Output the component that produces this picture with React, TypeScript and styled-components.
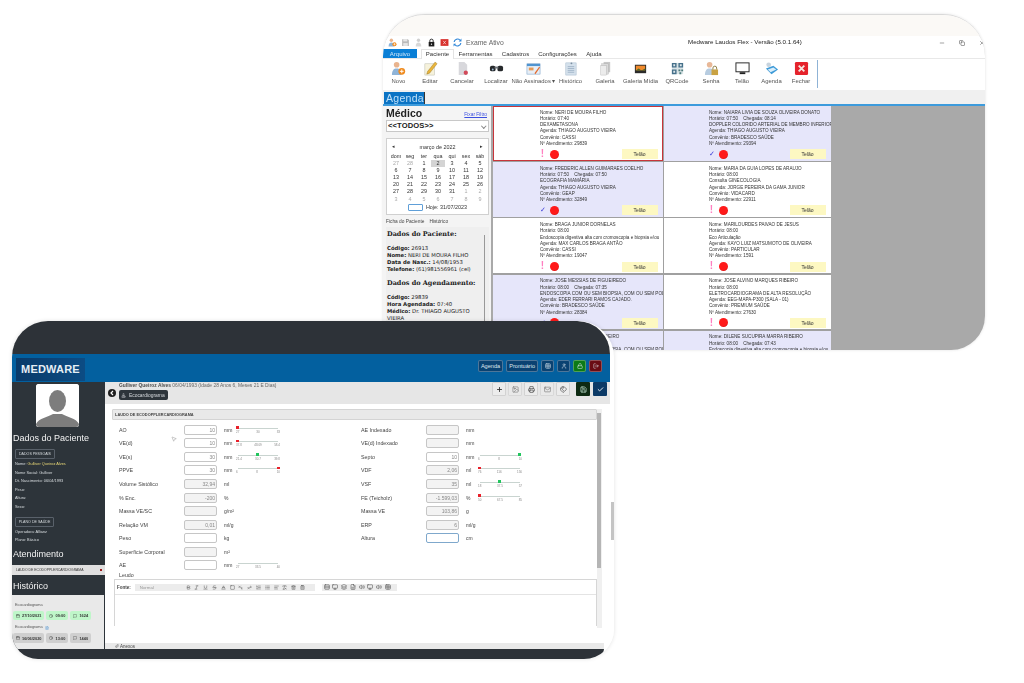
import React from "react";
import styled, { createGlobalStyle } from "styled-components";
import {
  Plus, Image, Printer, Mail, Tags, Save, Check, User, Lock, LogOut, Calendar, Clock, MessageSquare, FileText,
  Bold, Italic, Underline, Strikethrough, Baseline, Subscript, Superscript, List, ListOrdered,
  AlignLeft, RemoveFormatting, Trash2, Table, Monitor, Paperclip, MousePointer2, Stamp, Square, ClipboardList,
  Volume2, Layers, FileSpreadsheet, Rows3, Copy, Minus, X,
} from "lucide-react";

const Global = createGlobalStyle`
  html, body { margin: 0; padding: 0; background: #fff; }
  #root { width: 1024px; height: 683px; overflow: hidden; }
  * { box-sizing: border-box; }
`;

const Page = styled.div`
  position: relative;
  width: 1024px;
  height: 683px;
  background: #fff;
  font-family: "Liberation Sans", Arial, sans-serif;
`;

/* ---------- Desktop window (top) ---------- */
const DesktopWindow = styled.section`
  position: absolute;
  left: 383px;
  top: 14px;
  width: 602px;
  height: 336px;
  background: #fff;
  border-top: 1px solid #d9d9d9;
  border-radius: 42px 42px 34px 0;
  overflow: hidden;
  display: flex;
  flex-direction: column;
  filter: blur(0.35px);
  box-shadow: 0 0 3px rgba(0, 0, 0, 0.12);
`;
const TopBand = styled.div`
  height: 21px;
  flex: none;
  background: #fbf9f6;
`;
const QuickBar = styled.div`
  height: 13px;
  flex: none;
  display: flex;
  align-items: center;
  padding-left: 5px;
  gap: 4px;
  position: relative;
`;
const QuickLabel = styled.span`
  font-size: 6.8px;
  color: #666;
  margin-left: 0;
`;
const TitleText = styled.span`
  position: absolute;
  left: 305px;
  top: 2px;
  font-size: 6.2px;
  color: #222;
  white-space: nowrap;
`;
const WinControls = styled.div`
  margin-left: auto;
  display: flex;
  gap: 14px;
  color: #444;
  align-items: center;
`;
const MenuRow = styled.div`
  height: 10px;
  flex: none;
  display: flex;
  align-items: stretch;
  font-size: 6px;
  color: #333;
  border-bottom: 1px solid #e8e8e8;
`;
const FileTab = styled.div`
  width: 34px;
  background: #0a7fd6;
  color: #cfe7fa;
  text-align: center;
  line-height: 10px;
`;
const MenuTab = styled.div<{ $w: number; $on?: boolean }>`
  width: ${(p) => p.$w}px;
  text-align: center;
  line-height: 10px;
  ${(p) => (p.$on ? "border: 1px solid #e3e3e3; border-bottom: 0; background:#fff; height:11px; line-height:9px;" : "")}
`;
const Ribbon = styled.div`
  height: 31px;
  flex: none;
  display: flex;
  background: #fff;
`;
const RibbonItem = styled.div<{ $w: number }>`
  width: ${(p) => p.$w}px;
  flex: none;
  display: flex;
  flex-direction: column;
  align-items: center;
  padding-top: 2px;
  font-size: 5.9px;
  color: #555;
  white-space: nowrap;
  span { margin-top: 2px; }
`;
const RibbonEnd = styled.div`
  width: 1px;
  height: 28px;
  margin: 1px 0 0 1px;
  background: #8fb3d6;
`;
const TabStrip = styled.div`
  height: 14px;
  flex: none;
  background: #f0f0f0;
  display: flex;
  align-items: flex-end;
  padding-left: 1px;
`;
const AgendaTab = styled.div`
  width: 41px;
  height: 12px;
  background: #0a73c4;
  color: #bfe0f8;
  font-size: 10.5px;
  line-height: 12px;
  letter-spacing: 0.3px;
  padding-left: 2px;
  border-right: 1px solid #333;
`;
const BlueLine = styled.div`
  height: 2px;
  flex: none;
  background: #3d9bdc;
`;
const DeskBody = styled.div`
  flex: 1;
  display: flex;
  min-height: 0;
`;
const SidePanel = styled.div`
  width: 108px;
  flex: none;
  background: #f4f4f4;
  padding: 0 2px 0 3px;
  display: flex;
  flex-direction: column;
`;
const MedicoRow = styled.div`
  display: flex;
  align-items: flex-end;
  justify-content: space-between;
  height: 13px;
  padding-right: 2px;
  b { font-size: 10.5px; color: #222; }
  a { font-size: 4.8px; color: #3b4fe0; text-decoration: underline; margin-bottom: 2px; }
`;
const SelectBox = styled.div`
  margin-top: 1px;
  height: 12px;
  background: #fff;
  border: 1px solid #c8c8c8;
  font-size: 7.6px;
  font-weight: bold;
  color: #222;
  line-height: 10px;
  padding-left: 1px;
  position: relative;
  letter-spacing: 0.1px;
  &::after {
    content: "";
    position: absolute;
    right: 3px;
    top: 3px;
    width: 2.5px;
    height: 2.5px;
    border-right: 1px solid #888;
    border-bottom: 1px solid #888;
    transform: rotate(45deg);
  }
`;
const CalendarBox = styled.div`
  margin-top: 6px;
  height: 77px;
  background: #fff;
  border: 1px solid #d0d0d0;
  padding: 3px 2px 0;
  font-size: 5.4px;
  color: #444;
`;
const CalHeader = styled.div`
  height: 9px;
  display: flex;
  justify-content: space-between;
  align-items: center;
  padding: 0 3px;
  color: #333;
  i { font-style: normal; font-size: 4.5px; }
`;
const CalGrid = styled.div`
  display: grid;
  grid-template-columns: repeat(7, 14px);
  grid-auto-rows: 7.1px;
  line-height: 7.1px;
  text-align: center;
  margin-top: 2px;
`;
const CalCell = styled.div<{ $muted?: boolean; $sel?: boolean; $head?: boolean }>`
  color: ${(p) => (p.$muted ? "#aaa" : "#333")};
  background: ${(p) => (p.$sel ? "#d4d4d4" : "transparent")};
  ${(p) => (p.$head ? "margin-bottom:1px;" : "")}
`;
const TodayRow = styled.div`
  display: flex;
  justify-content: center;
  align-items: center;
  gap: 3px;
  margin-top: 1px;
  height: 7px;
  color: #333;
  &::before {
    content: "";
    width: 13px;
    height: 5px;
    border: 1px solid #5f9fd8;
    border-radius: 1px;
  }
`;
const SideTabs = styled.div`
  height: 12px;
  flex: none;
  display: flex;
  align-items: center;
  gap: 5px;
  font-size: 4.8px;
  color: #444;
  padding-top: 1px;
`;
const PatientPane = styled.div`
  flex: 1;
  background: #efefef;
  font-family: "DejaVu Sans", sans-serif;
  font-size: 5.3px;
  color: #222;
  padding: 3px 0 0 1px;
  line-height: 7px;
  position: relative;
  overflow: hidden;
  &::after {
    content: "";
    position: absolute;
    right: 4px;
    top: 8px;
    bottom: 0;
    width: 1px;
    background: #999;
  }
  h4 {
    margin: 0;
    font-family: "DejaVu Serif", serif;
    font-size: 6.5px;
    line-height: 9px;
    font-weight: bold;
  }
  p { margin: 0; padding-right: 10px; }
`;
const PaneGap = styled.div`
  height: 6px;
`;
const CardsArea = styled.div`
  flex: 1;
  background: #a9a9a9;
  min-width: 0;
  padding: 0 0 0 2px;
  overflow: hidden;
`;
const CardsGrid = styled.div`
  display: grid;
  grid-template-columns: 169.5px 166.5px;
  grid-auto-rows: 54.7px;
  column-gap: 1.5px;
  row-gap: 1.5px;
  background: #a0a0a0;
  width: 337.5px;
`;
const Card = styled.article<{ $tone?: boolean; $active?: boolean; $second?: boolean }>`
  background: ${(p) => (p.$tone ? "#e6e6fa" : "#fff")};
  ${(p) => (p.$active ? "outline: 1px solid #c8353a; outline-offset: -1px;" : "")}
  padding: 3.7px 5px 0 ${(p) => (p.$second ? 45 : 47)}px;
  font-size: 4.6px;
  line-height: 6.25px;
  color: #333;
  overflow: hidden;
  white-space: pre;
  display: flex;
  flex-direction: column;
`;
const CardLine = styled.div`
  height: 6.25px;
`;
const CardStatus = styled.div`
  display: flex;
  align-items: center;
  gap: 4.5px;
  margin-top: 1.5px;
  height: 11px;
`;
const Exclam = styled.span`
  font-size: 10px;
  font-weight: bold;
  color: #ff7fc0;
  width: 5px;
  text-align: center;
`;
const CheckMark = styled.span`
  font-size: 7px;
  color: #3b3bd8;
  width: 5px;
  text-align: center;
`;
const Ball = styled.span`
  width: 9px;
  height: 9px;
  border-radius: 50%;
  background: radial-gradient(circle at 45% 40%, #ff1a1a 55%, #b60000 100%);
`;
const TelaoBtn = styled.span`
  margin-left: auto;
  width: 36px;
  height: 10px;
  background: #fdf8c2;
  text-align: center;
  line-height: 10px;
  font-size: 5px;
  color: #333;
`;

/* ---------- Web app window (bottom) ---------- */
const WebWindow = styled.section`
  position: absolute;
  left: 12px;
  top: 321px;
  width: 602px;
  height: 338px;
  display: flex;
  flex-direction: column;
  background: #fff;
  border-radius: 36px 36px 30px 26px;
  overflow: hidden;
  filter: blur(0.4px);
  box-shadow: 0 0 4px rgba(0, 0, 0, 0.12);
`;
const WebTop = styled.div`
  height: 33px;
  flex: none;
  margin-right: 4px;
  background: #2d3238;
  border-top-right-radius: 34px;
`;
const WebHeader = styled.header`
  height: 28px;
  flex: none;
  margin-right: 4px;
  background: #03609f;
  display: flex;
  align-items: flex-end;
  padding-left: 4px;
`;
const Logo = styled.div`
  width: 69px;
  height: 23px;
  background: linear-gradient(90deg, #0a3a69, #0c4c84);
  color: #e6eef5;
  font-size: 11px;
  font-weight: bold;
  line-height: 23px;
  text-align: center;
  letter-spacing: 0.2px;
  margin-bottom: 1px;
`;
const HeaderActions = styled.div`
  margin-left: auto;
  display: flex;
  align-items: center;
  gap: 3px;
  height: 100%;
  padding: 0 8px 4px 0;
`;
const HeadBtn = styled.div<{ $bg?: string }>`
  height: 12px;
  padding: 0 2px;
  min-width: 13px;
  background: ${(p) => p.$bg ?? "#0a4272"};
  border: 1px solid rgba(255, 255, 255, 0.28);
  border-radius: 2px;
  color: #dfe8f0;
  font-size: 5.6px;
  line-height: 10px;
  display: flex;
  align-items: center;
  justify-content: center;
`;
const WebMain = styled.div`
  flex: 1;
  display: flex;
  min-height: 0;
`;
const Sidebar = styled.aside`
  width: 93px;
  flex: none;
  background: #2d343a;
  color: #d8dde0;
  display: flex;
  flex-direction: column;
  font-size: 3.9px;
  overflow: hidden;
`;
const Avatar = styled.div`
  width: 43px;
  height: 43px;
  margin: 2px 0 0 24px;
  flex: none;
  background: #fff;
  border-radius: 3px;
  overflow: hidden;
`;
const SideTitle = styled.h3<{ $mt: number }>`
  margin: ${(p) => p.$mt}px 0 0 1px;
  font-size: 9px;
  line-height: 11px;
  font-weight: normal;
  color: #f2f2f2;
  flex: none;
`;
const SideTag = styled.div<{ $mt: number; $w: number }>`
  margin: ${(p) => p.$mt}px 0 0 3px;
  width: ${(p) => p.$w}px;
  height: 10px;
  flex: none;
  border: 1px solid #59616a;
  border-radius: 1px;
  text-align: center;
  line-height: 8px;
  font-size: 3.6px;
`;
const SideField = styled.div`
  height: 8.6px;
  line-height: 8.6px;
  padding-left: 3px;
  flex: none;
  white-space: nowrap;
  em { font-style: normal; color: #e8d777; }
`;
const SideFieldsTop = styled.div<{ $mt: number }>`
  margin-top: ${(p) => p.$mt}px;
`;
const AttendRow = styled.div`
  margin: 5px -1px 0 0;
  height: 10px;
  flex: none;
  background: #dfdfdf;
  color: #333;
  display: flex;
  align-items: center;
  justify-content: space-between;
  padding: 0 4px;
  font-size: 3.4px;
  i { width: 2.5px; height: 2.5px; background: #9c1c1c; }
`;
const HistoryBox = styled.div`
  margin-top: 3px;
  flex: 1;
  background: #e9e9e9;
  color: #555;
  padding: 8px 1px 0;
  margin-right: 1px;
  font-size: 3.8px;
`;
const HistLabel = styled.div<{ $mt?: number }>`
  height: 5px;
  line-height: 5px;
  padding-left: 2px;
  margin-top: ${(p) => p.$mt ?? 0}px;
  display: flex;
  gap: 2px;
  align-items: center;
`;
const ChipRow = styled.div`
  display: flex;
  gap: 2px;
  margin-top: 3px;
`;
const Chip = styled.span<{ $green?: boolean }>`
  height: 9.5px;
  padding: 0 3px;
  background: ${(p) => (p.$green ? "#bff6c9" : "#cfcfcf")};
  color: #333;
  border-radius: 2px;
  font-size: 3.9px;
  font-weight: bold;
  white-space: nowrap;
  display: inline-flex;
  align-items: center;
  gap: 2px;
`;
const Content = styled.div`
  flex: 1;
  min-width: 0;
  display: flex;
  flex-direction: column;
  position: relative;
  background: #fff;
`;
const OuterThumb = styled.div`
  position: absolute;
  right: 0;
  top: 120px;
  width: 3px;
  height: 38px;
  background: #c4c4c4;
`;
const PatientStrip = styled.div`
  height: 22px;
  flex: none;
  margin-right: 4px;
  background: #e6e6e6;
  display: flex;
  padding-left: 3px;
  position: relative;
`;
const BackIcon = styled.div`
  margin-top: 1px;
  width: 8px;
  flex: none;
`;
const StripText = styled.div`
  padding: 1px 0 0 3px;
  font-size: 4.9px;
  color: #666;
  white-space: nowrap;
  b { color: #4d4d4d; }
`;
const ExamBtn = styled.div`
  margin-top: 2px;
  width: 49px;
  height: 10px;
  background: #2d343a;
  color: #d5d9dc;
  border-radius: 2px;
  display: flex;
  align-items: center;
  padding-left: 2px;
  gap: 3px;
  font-size: 4.9px;
`;
const ToolGroup = styled.div`
  margin-left: auto;
  display: flex;
  gap: 2px;
  padding: 0 3px 0 0;
`;
const ToolBtn = styled.div<{ $bg?: string; $fg?: string; $ml?: number; $faint?: boolean }>`
  width: 14px;
  height: 14px;
  margin-left: ${(p) => p.$ml ?? 0}px;
  border-radius: 1px;
  background: ${(p) => p.$bg ?? "#ececec"};
  color: ${(p) => p.$fg ?? "#333"};
  ${(p) => (p.$bg ? "" : "border: 1px solid #d2d2d2;")}
  opacity: ${(p) => (p.$faint ? 0.65 : 1)};
  display: flex;
  align-items: center;
  justify-content: center;
`;
const FormPanel = styled.div`
  flex: 1;
  min-height: 0;
  padding: 5px 0 0 7px;
  display: flex;
  flex-direction: column;
  position: relative;
`;
const FormInner = styled.div`
  width: 485px;
  position: relative;
  flex: none;
`;
const SectionBar = styled.div`
  height: 11px;
  background: #e9e9e9;
  border: 1px solid #d4d4d4;
  border-radius: 1px;
  font-size: 3.9px;
  line-height: 9px;
  padding-left: 2px;
  color: #444;
  font-weight: bold;
`;
const FormColumns = styled.div`
  display: grid;
  grid-template-columns: 242px 1fr;
  margin-top: 3px;
`;
const FormCol = styled.div`
  display: flex;
  flex-direction: column;
`;
const FieldRow = styled.div`
  height: 13.55px;
  display: flex;
  align-items: center;
  padding-left: 7px;
  font-size: 5.3px;
  color: #444;
`;
const FieldLabel = styled.div`
  width: 65px;
  flex: none;
`;
const ValueBox = styled.div<{ $off?: boolean; $focus?: boolean }>`
  width: 33px;
  height: 10px;
  flex: none;
  border: 1px solid ${(p) => (p.$focus ? "#7fa8cc" : "#c6c6c6")};
  border-radius: 2px;
  background: ${(p) => (p.$off ? "#f3f3f3" : "#fff")};
  text-align: right;
  padding-right: 1px;
  font-size: 5px;
  line-height: 8px;
  color: #888;
`;
const UnitText = styled.div`
  width: 15px;
  flex: none;
  margin-left: 7px;
  font-size: 5px;
  color: #444;
`;
const Gauge = styled.div`
  width: 44px;
  margin-left: -3px;
  position: relative;
  height: 10px;
  flex: none;
`;
const GaugeLine = styled.div`
  position: absolute;
  left: 2px;
  right: 2px;
  top: 3px;
  height: 1px;
  background: #c9d4d0;
`;
const GaugeDot = styled.i<{ $c: string; $left: number }>`
  position: absolute;
  top: 1.5px;
  left: ${(p) => p.$left}%;
  width: 2.5px;
  height: 2.5px;
  background: ${(p) => p.$c};
`;
const GaugeLabels = styled.div`
  position: absolute;
  left: 0;
  right: 0;
  top: 5px;
  display: flex;
  justify-content: space-between;
  font-size: 3px;
  line-height: 4px;
  color: #888;
`;
const Pointer = styled.div`
  position: absolute;
  left: 59px;
  top: 19px;
  color: #999;
`;
const LeudoLabel = styled.div`
  margin: 0 0 0 7px;
  font-size: 5.3px;
  line-height: 7px;
  color: #444;
  height: 7px;
`;
const Editor = styled.div`
  margin: 0 0 0 2px;
  width: 483px;
  height: 47px;
  border: 1px solid #d6d6d6;
  border-bottom: 0;
  flex: none;
`;
const EditorBar = styled.div`
  height: 15px;
  border-bottom: 1px solid #e4e4e4;
  display: flex;
  align-items: center;
  padding-left: 2px;
  gap: 4px;
`;
const FontLabel = styled.b`
  font-size: 4.5px;
  color: #444;
`;
const EditorGroup = styled.div<{ $w: number; $gap: number; $ml?: number }>`
  height: 7px;
  width: ${(p) => p.$w}px;
  margin-left: ${(p) => p.$ml ?? 0}px;
  background: #ececec;
  display: flex;
  align-items: center;
  gap: ${(p) => p.$gap}px;
  color: #444;
  padding-left: 2px;
  font-size: 4.4px;
`;
const FontSelect = styled.span`
  width: 45px;
  color: #999;
  padding-left: 3px;
`;
const InnerScroll = styled.div`
  position: absolute;
  left: 485px;
  top: 0;
  width: 5px;
  height: 219px;
  background: #f0f0f0;
  &::after {
    content: "";
    position: absolute;
    left: 0;
    top: 4px;
    width: 4px;
    height: 155px;
    background: #b5b5b5;
  }
`;
const AnexosBar = styled.div`
  margin-top: auto;
  height: 6px;
  flex: none;
  margin-right: 10px;
  margin-left: -7px;
  padding-left: 10px;
  background: #e9e9e9;
  font-size: 4.5px;
  line-height: 7px;
  color: #444;
  overflow: hidden;
`;
const WebFooter = styled.div`
  height: 10px;
  flex: none;
  margin-right: 10px;
  background: #2d3238;
  border-bottom-right-radius: 24px;
`;

/* ---------- Drawn icons ---------- */
const Svg = ({ s = 16, children }: { s?: number; children: React.ReactNode }) => (
  <svg width={s} height={s} viewBox="0 0 16 16">{children}</svg>
);
const DrawnIcon = ({ name, s = 16 }: { name: string; s?: number }) => {
  switch (name) {
    case "novo":
      return <Svg s={s}><circle cx="6" cy="4" r="3" fill="#e9b48e" /><path d="M1 15c0-5 2-7 5-7s5 2 5 7z" fill="#8fb4d8" /><circle cx="11.5" cy="11" r="3.6" fill="#f08a1c" /><path d="M11.5 9v4M9.5 11h4" stroke="#fff" strokeWidth="1" /></Svg>;
    case "editar":
      return <Svg s={s}><rect x="2" y="3" width="10" height="12" fill="#f6f2dc" stroke="#b5b5a5" strokeWidth=".5" /><path d="M5 11 13 1l2 2-8 10-3 1z" fill="#e9b43a" stroke="#8a6a20" strokeWidth=".4" /></Svg>;
    case "cancelar":
      return <Svg s={s}><path d="M4 1h6l3 3v11H4z" fill="#d8d8dc" /><circle cx="11.5" cy="12.5" r="2.3" fill="#d24a5a" /></Svg>;
    case "localizar":
      return <Svg s={s}><rect x="1" y="5" width="6" height="6" rx="2" fill="#26292c" /><rect x="9" y="5" width="6" height="6" rx="2" fill="#26292c" /><rect x="6" y="6" width="4" height="2" fill="#6d7278" /><circle cx="4" cy="9" r="1" fill="#9db9d0" /></Svg>;
    case "assinados":
      return <Svg s={s}><rect x="1" y="3" width="14" height="11" fill="#e7eef6" stroke="#7ba2c8" strokeWidth=".6" /><rect x="1" y="3" width="14" height="2.4" fill="#4f94d0" /><rect x="3" y="7" width="5" height="3" fill="#e79b57" /><path d="M9 13l5-7 1 1-5 7z" fill="#e36b2f" /></Svg>;
    case "historico":
      return <Svg s={s}><rect x="3" y="2" width="11" height="13" fill="#d5e1ec" stroke="#9cb2c6" strokeWidth=".5" /><path d="M5 6h7M5 8h7M5 10h7M5 12h7" stroke="#8ba2b8" strokeWidth=".7" /><circle cx="9" cy="2.5" r="1" fill="#7c8fa0" /></Svg>;
    case "galeria":
      return <Svg s={s}><rect x="6" y="1" width="7" height="11" fill="#c7c7c7" /><rect x="4" y="3" width="7" height="11" fill="#dadada" stroke="#aaa" strokeWidth=".4" /><rect x="3" y="5" width="6" height="10" fill="#ececec" stroke="#aaa" strokeWidth=".4" /></Svg>;
    case "midia":
      return <Svg s={s}><rect x="2" y="4" width="12" height="9" fill="#2b2b2b" /><rect x="3" y="5" width="10" height="5" fill="#f08a2c" /><path d="M3 10l3-2 3 2 4-2v2z" fill="#4a6b2a" /></Svg>;
    case "qr":
      return <Svg s={s}><rect x="2" y="2" width="12" height="12" fill="#d9e3e6" /><path d="M2 2h5v5H2zM9 2h5v5H9zM2 9h5v5H2z" fill="#46708a" /><path d="M3.5 3.5h2v2h-2zM10.5 3.5h2v2h-2zM3.5 10.5h2v2h-2z" fill="#dfe8ec" /><path d="M9 9h2v2H9zM12 9h2v2h-2zM10 12h2v2h-2z" fill="#4b7a7a" /></Svg>;
    case "senha":
      return <Svg s={s}><circle cx="6" cy="4" r="3" fill="#e8b898" /><path d="M1 15c0-5 2-7 5-7s5 2 5 7z" fill="#b7cce0" /><rect x="8" y="9" width="7" height="6" fill="#c9a243" /><path d="M9.5 9V7.5a2 2 0 0 1 4 0V9" fill="none" stroke="#8a7a40" /></Svg>;
    case "telao":
      return <Svg s={s}><rect x="1" y="2" width="14" height="9.5" fill="#fff" stroke="#222" strokeWidth="1" /><rect x="5" y="12" width="6" height="2" fill="#222" /></Svg>;
    case "agenda":
      return <Svg s={s}><circle cx="5" cy="4" r="2.5" fill="#c8d4de" /><path d="M2 8l8-3 5 4-7 5z" fill="#3f9bd8" /><path d="M4 9l6-2 3 2-6 3z" fill="#d9eefb" /></Svg>;
    case "fechar":
      return <Svg s={s}><rect x="1" y="1" width="14" height="14" rx="1.5" fill="#e5232c" /><path d="M5 5l6 6M11 5l-6 6" stroke="#f5e6e0" strokeWidth="2" /></Svg>;
    case "sync":
      return <Svg s={s}><path d="M3 7a5 5 0 0 1 9-2l-2 1h5V1l-2 2A7 7 0 0 0 1 7z" fill="#2f86d8" /><path d="M13 9a5 5 0 0 1-9 2l2-1H1v5l2-2a7 7 0 0 0 12-4z" fill="#2f86d8" /></Svg>;
    case "floppy":
      return <Svg s={s}><path d="M2 2h10l2 2v10H2z" fill="#b9b9b9" /><rect x="4" y="2" width="7" height="4" fill="#e6e6e6" /><rect x="4" y="9" width="8" height="5" fill="#e6e6e6" /></Svg>;
    case "lock":
      return <Svg s={s}><rect x="3" y="7" width="10" height="8" fill="#1c1c1c" /><path d="M5 7V5a3 3 0 0 1 6 0v2" fill="none" stroke="#1c1c1c" strokeWidth="1.6" /><circle cx="8" cy="11" r="1.2" fill="#fff" /></Svg>;
    case "ghost":
      return <Svg s={s}><circle cx="8" cy="4" r="3" fill="#d0d0d0" /><path d="M3 15c0-5 2-7 5-7s5 2 5 7z" fill="#d8d8d8" /></Svg>;
    case "xred":
      return <Svg s={s}><rect x="1" y="2" width="14" height="12" fill="#d8312d" /><path d="M5.5 5l5 6M10.5 5l-5 6" stroke="#f4dcdc" strokeWidth="1.3" /></Svg>;
    case "back":
      return <Svg s={s}><circle cx="8" cy="8" r="8" fill="#1e1e1e" /><path d="M10 4 6 8l4 4" fill="none" stroke="#fff" strokeWidth="2.4" /></Svg>;
    default:
      return null;
  }
};

/* ---------- Data ---------- */
const ribbon: [string, string, number][] = [
  ["novo", "Novo", 31], ["editar", "Editar", 32], ["cancelar", "Cancelar", 32], ["localizar", "Localizar", 36],
  ["assinados", "Não Assinados ▾", 39], ["historico", "Histórico", 35], ["galeria", "Galeria", 34], ["midia", "Galeria Mídia", 37],
  ["qr", "QRCode", 36], ["senha", "Senha", 32], ["telao", "Telão", 30], ["agenda", "Agenda", 29], ["fechar", "Fechar", 30],
];
const weekdays = ["dom", "seg", "ter", "qua", "qui", "sex", "sáb"];
const days: [string, boolean?][] = [
  ["27", true], ["28", true], ["1"], ["2"], ["3"], ["4"], ["5"],
  ["6"], ["7"], ["8"], ["9"], ["10"], ["11"], ["12"],
  ["13"], ["14"], ["15"], ["16"], ["17"], ["18"], ["19"],
  ["20"], ["21"], ["22"], ["23"], ["24"], ["25"], ["26"],
  ["27"], ["28"], ["29"], ["30"], ["31"], ["1", true], ["2", true],
  ["3", true], ["4", true], ["5", true], ["6", true], ["7", true], ["8", true], ["9", true],
];
type C = { lines: string[]; tone?: boolean; active?: boolean; ok?: boolean };
const cards: C[] = [
  { active: true, lines: ["Nome: NERI DE MOURA FILHO", "Horário: 07:40", "DEXAMETASONA", "Agenda: THIAGO AUGUSTO VIEIRA", "Convênio: CASSI", "Nº Atendimento: 29839"] },
  { tone: true, ok: true, lines: ["Nome: NAIARA LIVIA DE SOUZA OLIVEIRA DONATO", "Horário: 07:50    Chegada: 08:14", "DOPPLER COLORIDO ARTERIAL DE MEMBRO INFERIOR", "Agenda: THIAGO AUGUSTO VIEIRA", "Convênio: BRADESCO SAÚDE", "Nº Atendimento: 29394"] },
  { tone: true, ok: true, lines: ["Nome: FREDERIC ALLEN GUIMARAES COELHO", "Horário: 07:50    Chegada: 07:50", "ECOGRAFIA MAMÁRIA", "Agenda: THIAGO AUGUSTO VIEIRA", "Convênio: GEAP", "Nº Atendimento: 32849"] },
  { lines: ["Nome: MARIA DA GUIA LOPES DE ARAUJO", "Horário: 08:00", "Consulta GINECOLOGIA", "Agenda: JORGE PEREIRA DA GAMA JUNIOR", "Convênio: VIDACARD", "Nº Atendimento: 22911"] },
  { lines: ["Nome: BRAGA JUNIOR DORNELAS", "Horário: 08:00", "Endoscopia digestiva alta com cromoscopia e biopsia e/ou", "Agenda: MAX CARLOS BRAGA ANTÃO", "Convênio: CASSI", "Nº Atendimento: 19047"] },
  { lines: ["Nome: MARILOURDES PAIVAO DE JESUS", "Horário: 08:00", "Eco Articulação", "Agenda: KAYO LUIZ MATSUMOTO DE OLIVEIRA", "Convênio: PARTICULAR", "Nº Atendimento: 1591"] },
  { tone: true, ok: true, lines: ["Nome: JOSE MESSIAS DE FIGUEIREDO", "Horário: 08:00    Chegada: 07:35", "ENDOSCOPIA COM OU SEM BIOPSIA, COM OU SEM POLIPECTOMIA", "Agenda: EDER FERRARI RAMOS CAJADO.", "Convênio: BRADESCO SAÚDE", "Nº Atendimento: 28384"] },
  { lines: ["Nome: JOSE ALVINO MARQUES RIBEIRO", "Horário: 08:00", "ELETROCARDIOGRAMA DE ALTA RESOLUÇÃO", "Agenda: EEG-MAPA-P300 (SALA - 01)", "Convênio: PREMIUM SAÚDE", "Nº Atendimento: 27630"] },
  { tone: true, ok: true, lines: ["Nome: LUCIA MARIA ALVES RIBEIRO", "Horário: 08:00    Chegada: 07:40", "ENDOSCOPIA COM OU SEM BIOPSIA, COM OU SEM POLIPECTOMIA", "", "", ""] },
  { tone: true, ok: true, lines: ["Nome: DILENE SUCUPIRA MARRA RIBEIRO", "Horário: 08:00    Chegada: 07:43", "Endoscopia digestiva alta com cromoscopia e biopsia e/ou", "", "", ""] },
];
type G = { dot: string; pos: number; labels: [string, string, string] };
type F = { label: string; value?: string; off?: boolean; focus?: boolean; unit: string; gauge?: G };
const left: F[] = [
  { label: "AO", value: "10", unit: "mm", gauge: { dot: "#e8202a", pos: 0, labels: ["27", "30", "33"] } },
  { label: "VE(d)", value: "10", unit: "mm", gauge: { dot: "#e8202a", pos: 0, labels: ["37.8", "48.09", "58.4"] } },
  { label: "VE(s)", value: "30", unit: "mm", gauge: { dot: "#22c55e", pos: 46, labels: ["21.4", "30.7", "39.8"] } },
  { label: "PPVE", value: "30", unit: "mm", gauge: { dot: "#e8202a", pos: 94, labels: ["6", "8", "10"] } },
  { label: "Volume Sistólico", value: "32,94", off: true, unit: "ml" },
  { label: "% Enc.", value: "-200", off: true, unit: "%" },
  { label: "Massa VE/SC", off: true, unit: "g/m²" },
  { label: "Relação VM", value: "0,01", off: true, unit: "ml/g" },
  { label: "Peso", unit: "kg" },
  { label: "Superfície Corporal", off: true, unit: "m²" },
  { label: "AE", unit: "mm", gauge: { dot: "transparent", pos: 0, labels: ["27", "33.5", "40"] } },
];
const right: F[] = [
  { label: "AE Indexado", off: true, unit: "mm" },
  { label: "VE(d) Indexado", off: true, unit: "mm" },
  { label: "Septo", value: "10", unit: "mm", gauge: { dot: "#22c55e", pos: 92, labels: ["6", "8", "10"] } },
  { label: "VDF", value: "2,06", off: true, unit: "ml", gauge: { dot: "#e8202a", pos: 0, labels: ["76", "116", "156"] } },
  { label: "VSF", value: "35", off: true, unit: "ml", gauge: { dot: "#22c55e", pos: 46, labels: ["18", "37.5", "57"] } },
  { label: "FE (Teicholz)", value: "-1.599,03", off: true, unit: "%", gauge: { dot: "#e8202a", pos: 0, labels: ["50", "67.5", "85"] } },
  { label: "Massa VE", value: "103,86", off: true, unit: "g" },
  { label: "ERP", value: "6", off: true, unit: "ml/g" },
  { label: "Altura", focus: true, unit: "cm" },
];

const Field = ({ f }: { f: F }) => (
  <FieldRow>
    <FieldLabel>{f.label}</FieldLabel>
    <ValueBox $off={f.off} $focus={f.focus}>{f.value}</ValueBox>
    <UnitText>{f.unit}</UnitText>
    {f.gauge && (
      <Gauge>
        <GaugeLine />
        <GaugeDot $c={f.gauge.dot} $left={f.gauge.pos} />
        <GaugeLabels>{f.gauge.labels.map((l, i) => <span key={i}>{l}</span>)}</GaugeLabels>
      </Gauge>
    )}
  </FieldRow>
);

export default function App() {
  return (
    <Page>
      <Global />
      <DesktopWindow>
        <TopBand />
        <QuickBar>
          {["novo", "floppy", "ghost", "lock", "xred", "sync"].map((n) => <DrawnIcon key={n} name={n} s={9} />)}
          <QuickLabel>Exame Ativo</QuickLabel>
          <TitleText>Medware Laudos Flex - Versão (5.0.1.64)</TitleText>
          <WinControls>
            <Minus size={6} />
            <Copy size={6} />
            <X size={6} />
          </WinControls>
        </QuickBar>
        <MenuRow>
          <FileTab>Arquivo</FileTab>
          <MenuTab $w={4} />
          <MenuTab $w={33} $on>Paciente</MenuTab>
          <MenuTab $w={43}>Ferramentas</MenuTab>
          <MenuTab $w={37}>Cadastros</MenuTab>
          <MenuTab $w={47}>Configurações</MenuTab>
          <MenuTab $w={26}>Ajuda</MenuTab>
        </MenuRow>
        <Ribbon>
          {ribbon.map(([n, l, w]) => (
            <RibbonItem key={n} $w={w}>
              <DrawnIcon name={n} s={15} />
              <span>{l}</span>
            </RibbonItem>
          ))}
          <RibbonEnd />
        </Ribbon>
        <TabStrip>
          <AgendaTab>Agenda</AgendaTab>
        </TabStrip>
        <BlueLine />
        <DeskBody>
          <SidePanel>
            <MedicoRow>
              <b>Médico</b>
              <a>Fixar Filtro</a>
            </MedicoRow>
            <SelectBox>&lt;&lt;TODOS&gt;&gt;</SelectBox>
            <CalendarBox>
              <CalHeader><i>◂</i><span>março de 2022</span><i>▸</i></CalHeader>
              <CalGrid>
                {weekdays.map((d) => <CalCell key={d} $head>{d}</CalCell>)}
                {days.map(([d, m], i) => <CalCell key={i} $muted={m} $sel={i === 3}>{d}</CalCell>)}
              </CalGrid>
              <TodayRow>Hoje: 31/07/2023</TodayRow>
            </CalendarBox>
            <SideTabs><span>Ficha do Paciente</span><span>Histórico</span></SideTabs>
            <PatientPane>
              <h4>Dados do Paciente:</h4>
              <PaneGap />
              <p><b>Código:</b> 26913</p>
              <p><b>Nome:</b> NERI DE MOURA FILHO</p>
              <p><b>Data de Nasc.:</b> 14/08/1953</p>
              <p><b>Telefone:</b> (61)981556961 (cel)</p>
              <PaneGap />
              <h4>Dados do Agendamento:</h4>
              <PaneGap />
              <p><b>Código:</b> 29839</p>
              <p><b>Hora Agendada:</b> 07:40</p>
              <p><b>Médico:</b> Dr. THIAGO AUGUSTO VIEIRA</p>
            </PatientPane>
          </SidePanel>
          <CardsArea>
            <CardsGrid>
              {cards.map((c, i) => (
                <Card key={i} $tone={c.tone} $active={c.active} $second={i % 2 === 1}>
                  {c.lines.map((l, j) => <CardLine key={j}>{l}</CardLine>)}
                  <CardStatus>
                    {c.ok ? <CheckMark>✓</CheckMark> : <Exclam>!</Exclam>}
                    <Ball />
                    <TelaoBtn>Telão</TelaoBtn>
                  </CardStatus>
                </Card>
              ))}
            </CardsGrid>
          </CardsArea>
        </DeskBody>
      </DesktopWindow>

      <WebWindow>
        <WebTop />
        <WebHeader>
          <Logo>MEDWARE</Logo>
          <HeaderActions>
            <HeadBtn>Agenda</HeadBtn>
            <HeadBtn>Prontuário</HeadBtn>
            <HeadBtn><Table size={6} /></HeadBtn>
            <HeadBtn><User size={6} /></HeadBtn>
            <HeadBtn $bg="#0c7a16"><Lock size={6} /></HeadBtn>
            <HeadBtn $bg="#6a0c14"><LogOut size={6} /></HeadBtn>
          </HeaderActions>
        </WebHeader>
        <WebMain>
          <Sidebar>
            <Avatar>
              <svg width="43" height="43" viewBox="0 0 43 43">
                <rect width="43" height="43" fill="#fff" />
                <ellipse cx="21.5" cy="17" rx="8.5" ry="11" fill="#7d7d7d" />
                <path d="M0 43v-3c3-6 12-7 17-10h9c5 3 14 4 17 10v3z" fill="#7d7d7d" />
              </svg>
            </Avatar>
            <SideTitle $mt={6}>Dados do Paciente</SideTitle>
            <SideTag $mt={5} $w={40}>DADOS PESSOAIS</SideTag>
            <SideFieldsTop $mt={1}>
              <SideField>Nome: <em>Gulliver Queiroz Alves</em></SideField>
              <SideField>Nome Social: Gulliver</SideField>
              <SideField>Dt. Nascimento: 06/04/1993</SideField>
              <SideField>Peso:</SideField>
              <SideField>Altura:</SideField>
              <SideField>Sexo:</SideField>
            </SideFieldsTop>
            <SideTag $mt={5} $w={39}>PLANO DE SAÚDE</SideTag>
            <SideFieldsTop $mt={1}>
              <SideField>Operadora: Allianz</SideField>
              <SideField>Plano: Básico</SideField>
            </SideFieldsTop>
            <SideTitle $mt={4}>Atendimento</SideTitle>
            <AttendRow>LAUDO DE ECODOPPLERCARDIOGRAMA<i /></AttendRow>
            <SideTitle $mt={6}>Histórico</SideTitle>
            <HistoryBox>
              <HistLabel>Ecocardiograma</HistLabel>
              <ChipRow>
                <Chip $green><Calendar size={4} />27/10/2021</Chip>
                <Chip $green><Clock size={4} />09:00</Chip>
                <Chip $green><MessageSquare size={4} />1624</Chip>
              </ChipRow>
              <HistLabel $mt={5}>Ecocardiograma <FileText size={4} color="#4a8ed0" /></HistLabel>
              <ChipRow>
                <Chip><Calendar size={4} />16/06/2020</Chip>
                <Chip><Clock size={4} />13:00</Chip>
                <Chip><MessageSquare size={4} />1440</Chip>
              </ChipRow>
            </HistoryBox>
          </Sidebar>
          <Content>
            <PatientStrip>
              <BackIcon><DrawnIcon name="back" s={8} /></BackIcon>
              <StripText>
                <div><b>Gulliver Queiroz Alves</b> 06/04/1993 (Idade 28 Anos 6, Meses 21 E Dias)</div>
                <ExamBtn><Stamp size={5} />Ecocardiograma</ExamBtn>
              </StripText>
              <ToolGroup>
                <ToolBtn><Plus size={7} strokeWidth={3} /></ToolBtn>
                <ToolBtn $faint><Image size={7} /></ToolBtn>
                <ToolBtn><Printer size={7} /></ToolBtn>
                <ToolBtn $faint><Mail size={7} /></ToolBtn>
                <ToolBtn><Tags size={7} /></ToolBtn>
                <ToolBtn $bg="#0d2a12" $fg="#dfe" $ml={4}><Save size={7} /></ToolBtn>
                <ToolBtn $bg="#0c3a66" $fg="#fff" $ml={1}><Check size={7} strokeWidth={3} /></ToolBtn>
              </ToolGroup>
            </PatientStrip>
            <FormPanel>
              <FormInner>
                <InnerScroll />
                <SectionBar>LAUDO DE ECODOPPLERCARDIOGRAMA</SectionBar>
                <FormColumns>
                  <FormCol>{left.map((f) => <Field key={f.label} f={f} />)}</FormCol>
                  <FormCol>{right.map((f) => <Field key={f.label} f={f} />)}</FormCol>
                </FormColumns>
                <Pointer><MousePointer2 size={6} /></Pointer>
                <LeudoLabel>Leudo</LeudoLabel>
                <Editor>
                  <EditorBar>
                    <FontLabel>Fonte:</FontLabel>
                    <EditorGroup $w={180} $gap={3.8}>
                      <FontSelect>Normal</FontSelect>
                      {[Bold, Italic, Underline, Strikethrough, Baseline, Square, Subscript, Superscript, ListOrdered, List, AlignLeft, RemoveFormatting, Trash2, ClipboardList].map((I, k) => <I key={k} size={5} />)}
                    </EditorGroup>
                    <EditorGroup $w={75} $gap={2.7} $ml={3}>
                      {[Rows3, Monitor, Layers, FileSpreadsheet, Volume2, Monitor, Volume2, Table].map((I, k) => <I key={k} size={6} />)}
                    </EditorGroup>
                  </EditorBar>
                </Editor>
              </FormInner>
              <AnexosBar><Paperclip size={4} /> Anexos</AnexosBar>
            </FormPanel>
            <OuterThumb />
          </Content>
        </WebMain>
        <WebFooter />
      </WebWindow>
    </Page>
  );
}
